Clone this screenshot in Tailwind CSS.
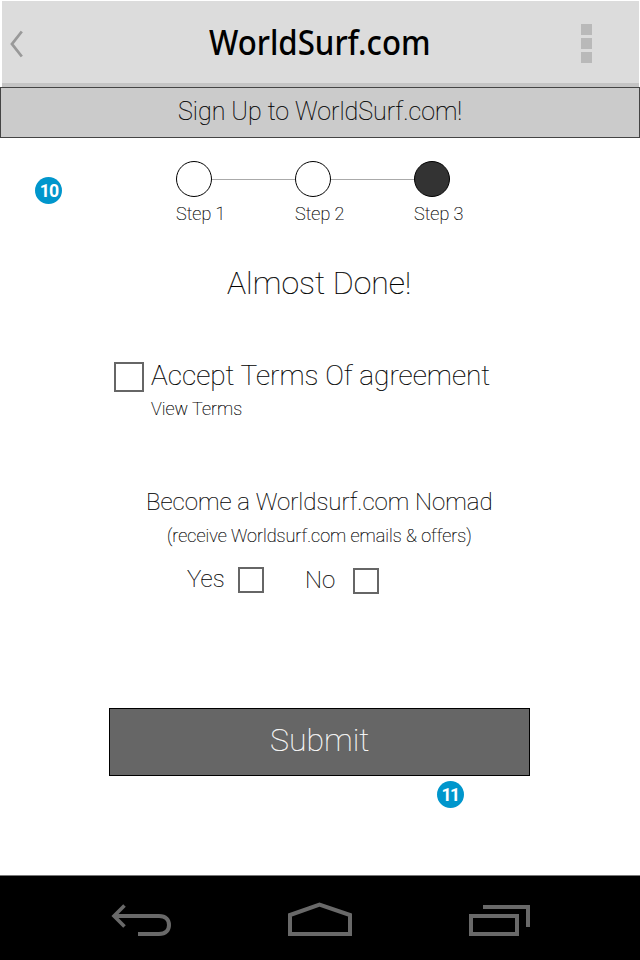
<!DOCTYPE html>
<html lang="en">
<head>
<meta charset="utf-8">
<title>WorldSurf.com</title>
<script src="https://cdn.jsdelivr.net/npm/@tailwindcss/browser@4"></script>
</head>
<body class="w-[640px] h-[960px] overflow-hidden bg-white font-['Roboto',sans-serif] font-thin text-black whitespace-nowrap">
<div class="relative flex flex-col w-[640px] h-[960px]">
  <header class="mt-px ml-[2px] mr-px h-[86px] shrink-0 bg-[#dcdcdc] border-b-4 border-[#c4c4c4] flex items-start">
    <svg class="w-4 h-7 mt-[29px] ml-[7px]" viewBox="0 0 16 28" fill="none" stroke="#999" stroke-width="2.8"><path d="M12.800 1.500 3 14l9.800 12.500"/></svg>
    <h1 class="ml-[184px] mt-[17px] w-[222px] h-12 leading-[48px] text-[34px] font-medium font-['Noto_Sans',sans-serif]"><span class="inline-block origin-left scale-x-[0.917]">WorldSurf.com</span></h1>
    <div class="ml-[150px] mt-[23px] flex flex-col gap-[3px]">
      <i class="block size-[11px] bg-[#b9b9b9]"></i><i class="block size-[11px] bg-[#b9b9b9]"></i><i class="block size-[11px] bg-[#b9b9b9]"></i>
    </div>
  </header>
  <div class="h-[51px] shrink-0 bg-[#cbcbcb] border border-[#444] pl-[177px] pt-[7px]">
    <p class="leading-[34px] text-[25px] [-webkit-text-stroke:0.2px_black]">Sign Up to WorldSurf.com!</p>
  </div>
  <main class="h-[737px] shrink-0 flex flex-col items-start pt-[23px] [-webkit-text-stroke:0.2px_black]">
    <ol class="flex ml-[176px]">
      <li class="w-[119px]"><div class="flex items-center"><i class="size-9 rounded-full border border-black"></i><i class="h-px flex-1 bg-[#aaa]"></i></div><p class="mt-[7px] leading-5 text-[18px]">Step 1</p></li>
      <li class="w-[119px]"><div class="flex items-center"><i class="size-9 rounded-full border border-black"></i><i class="h-px flex-1 bg-[#aaa]"></i></div><p class="mt-[7px] leading-5 text-[18px]">Step 2</p></li>
      <li><i class="block size-9 rounded-full border border-black bg-[#333]"></i><p class="mt-[7px] leading-5 text-[18px]">Step 3</p></li>
    </ol>
    <h2 class="mt-[39px] ml-[227px] leading-10 text-[32px]">Almost Done!</h2>
    <div class="mt-[55px] ml-[114px] flex items-start">
      <i class="size-[30px] mt-1 border-2 border-[#666]"></i>
      <div class="ml-[7px]"><p class="leading-9 text-[28px]">Accept Terms Of agreement</p><p class="mt-[5px] leading-5 text-[18px]">View Terms</p></div>
    </div>
    <p class="mt-[68px] ml-[146px] leading-[30px] text-[24px]">Become a Worldsurf.com Nomad</p>
    <p class="mt-[9px] ml-[167px] leading-5 text-[18px]">(receive Worldsurf.com emails &amp; offers)</p>
    <div class="mt-[19px] ml-[187px] h-[30px] flex items-start leading-[30px] text-[24px]">
      <span class="w-[51px] -mt-px">Yes</span><i class="size-[26px] mt-[2px] border-2 border-[#666]"></i>
      <span class="ml-[41px] w-[48px]">No</span><i class="size-[26px] mt-[3px] border-2 border-[#666]"></i>
    </div>
    <button class="mt-[113px] ml-[109px] w-[421px] h-[68px] bg-[#666] border border-black text-white text-left pl-[160px] pb-[5px] leading-10 text-[32px] [-webkit-text-stroke:0.15px_white]">Submit</button>
  </main>
  <nav class="h-[85px] shrink-0 bg-black border-t border-[#777]">
    <svg class="block w-[640px] h-[84px]" viewBox="0 876 640 84" fill="none" stroke="#696969" stroke-width="4">
      <path d="M124.500 905.500 114 916l10.500 10.500" stroke-width="3.600"/><path d="M114 916h45c7 0 10 4 10 9s-3 9-10 9h-21"/>
      <path d="M290 934v-19l29.500-10.500L350 915v19Z"/>
      <path d="M471 916h46v18h-46ZM483 907h45v20"/>
    </svg>
  </nav>
  <div class="absolute left-[35px] top-[177px] size-[27px] rounded-full bg-[#0096cc] text-white text-center leading-[27px] text-[19px] font-bold tracking-[-1px]"><span class="inline-block scale-x-[0.93]">10</span></div>
  <div class="absolute left-[437px] top-[781px] size-[27px] rounded-full bg-[#0096cc] text-white text-center leading-[27px] text-[19px] font-bold tracking-[-2px] pr-px"><span class="inline-block scale-x-[0.93]">11</span></div>
</div>
</body>
</html>
